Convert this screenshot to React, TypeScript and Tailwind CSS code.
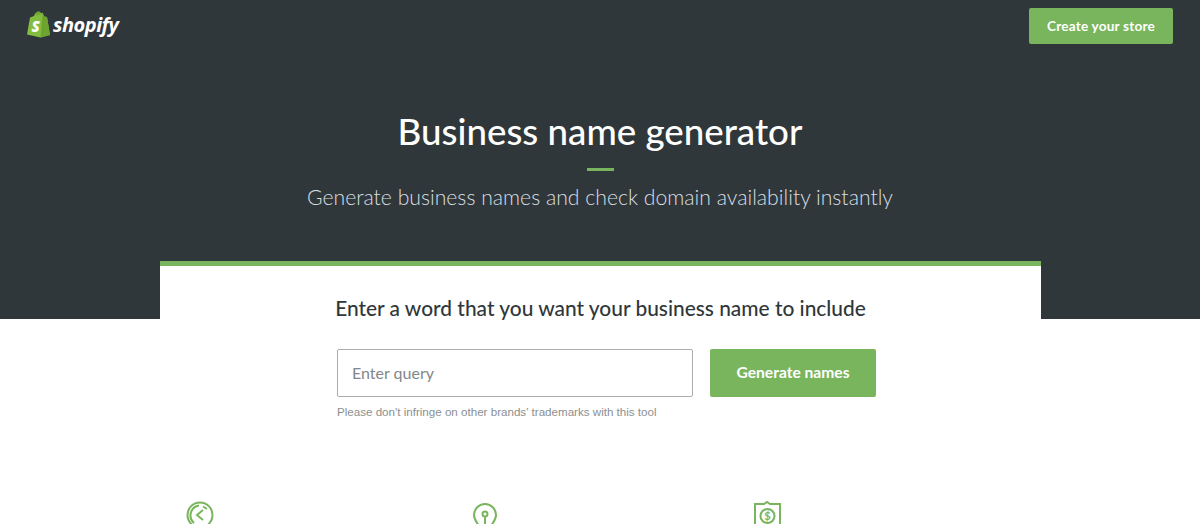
export default function App() {
  return (
    <div className="h-[524px] overflow-hidden bg-white font-['Lato',sans-serif]">
      <section className="h-[319px] bg-[#30373b]">
        <header className="flex items-start justify-between pl-[26px] pr-[27px] pt-[8px]">
          <div className="flex items-center gap-[2px] pt-[3px]">
            <svg width="25" height="27" viewBox="0 0 25 27" aria-hidden="true">
              <path d="M1 23.5 4 6.5 8 5C9 2 10.5.5 12.5.5c1.2 0 2 .7 2.600 1.700l1.600-.4L18 5.500 21 6l3 18-9.500 2.500z" fill="#83bd3f" />
              <path d="M16.700 1.800 18 5.500 21 6l3 18-9.500 2.500z" fill="#6ea32f" />
              <path d="M8 5c1-2.500 2.500-3.600 4-3.500M11 4.500c.6-1.800 1.400-2.800 2.500-2.800M14 3.700c0-.7-.2-1.300-.5-1.800" stroke="#5d8a27" strokeWidth="0.9" fill="none" />
              <text x="5.500" y="20.500" fontSize="15" fontWeight="800" fill="#fff" fontFamily="'Open Sans',sans-serif" fontStyle="italic">S</text>
            </svg>
            <span className="text-[20px] leading-[27px] font-bold italic tracking-[-0.5px] text-white font-['Open_Sans',sans-serif]">shopify</span>
          </div>
          <button className="h-[36px] w-[144px] rounded-[2px] bg-[#79b55d] text-[13.600px] font-bold tracking-[0.2px] text-white">Create your store</button>
        </header>
        <h1 className="mt-[60px] text-center text-[36.700px] leading-[54px] font-medium text-white">Business name generator</h1>
        <div className="mx-auto mt-[10px] h-[3px] w-[27px] bg-[#79b55d]" />
        <p className="mt-[11px] text-center text-[21.200px] leading-[30px] font-light text-[#d8dfe3]">Generate business names and check domain availability instantly</p>
      </section>
      <main className="ml-[160px] -mt-[58px] h-[263px] w-[881px] border-t-[5px] border-[#79b55d] bg-white">
        <h2 className="mt-[27px] text-center text-[20.900px] leading-[30px] font-medium text-[#30373b]">Enter a word that you want your business name to include</h2>
        <div className="mt-[26px] ml-[177px] flex items-start gap-[17px]">
          <div className="flex h-[48px] w-[356px] items-center rounded-[2px] border border-[#a9adb0] px-[14px] text-[16px] text-[#81878b]">Enter query</div>
          <button className="h-[48px] w-[166px] rounded-[2px] bg-[#79b55d] text-[15.600px] font-bold text-white">Generate names</button>
        </div>
        <p className="mt-[7px] ml-[177px] font-['Liberation_Sans',sans-serif] text-[11.600px] leading-[16px] text-[#8b8f92]">Please don't infringe on other brands' trademarks with this tool</p>
        <div className="mt-[80px] flex">
          <svg className="ml-[26px]" width="30" height="30" viewBox="0 0 30 30" fill="none" stroke="#79b55d" strokeWidth="2" aria-hidden="true">
            <circle cx="14" cy="15" r="12.500" />
            <path d="M8 23A10 10 0 0 1 13 5.500" />
            <path d="M17 6.500 21 9M17 10l-6 5 6 5" />
          </svg>
          <svg className="ml-[254px]" width="30" height="30" viewBox="0 0 30 30" fill="none" stroke="#79b55d" strokeWidth="2" aria-hidden="true">
            <path d="M9 27c0-3-5-6-5-12A11 11 0 0 1 26 15c0 6-5 9-5 12" />
            <circle cx="15" cy="14" r="2.500" />
            <path d="M15 17v12" />
          </svg>
          <svg className="ml-[253px]" width="30" height="30" viewBox="0 0 30 30" fill="none" stroke="#79b55d" strokeWidth="2" aria-hidden="true">
            <path d="M2 30V4h9l3-2 3 2h10v26" />
            <circle cx="14.500" cy="16" r="7" />
            <text x="14.500" y="20" fontSize="11" textAnchor="middle" stroke="none" fill="#79b55d" fontWeight="700">$</text>
          </svg>
        </div>
      </main>
    </div>
  );
}
